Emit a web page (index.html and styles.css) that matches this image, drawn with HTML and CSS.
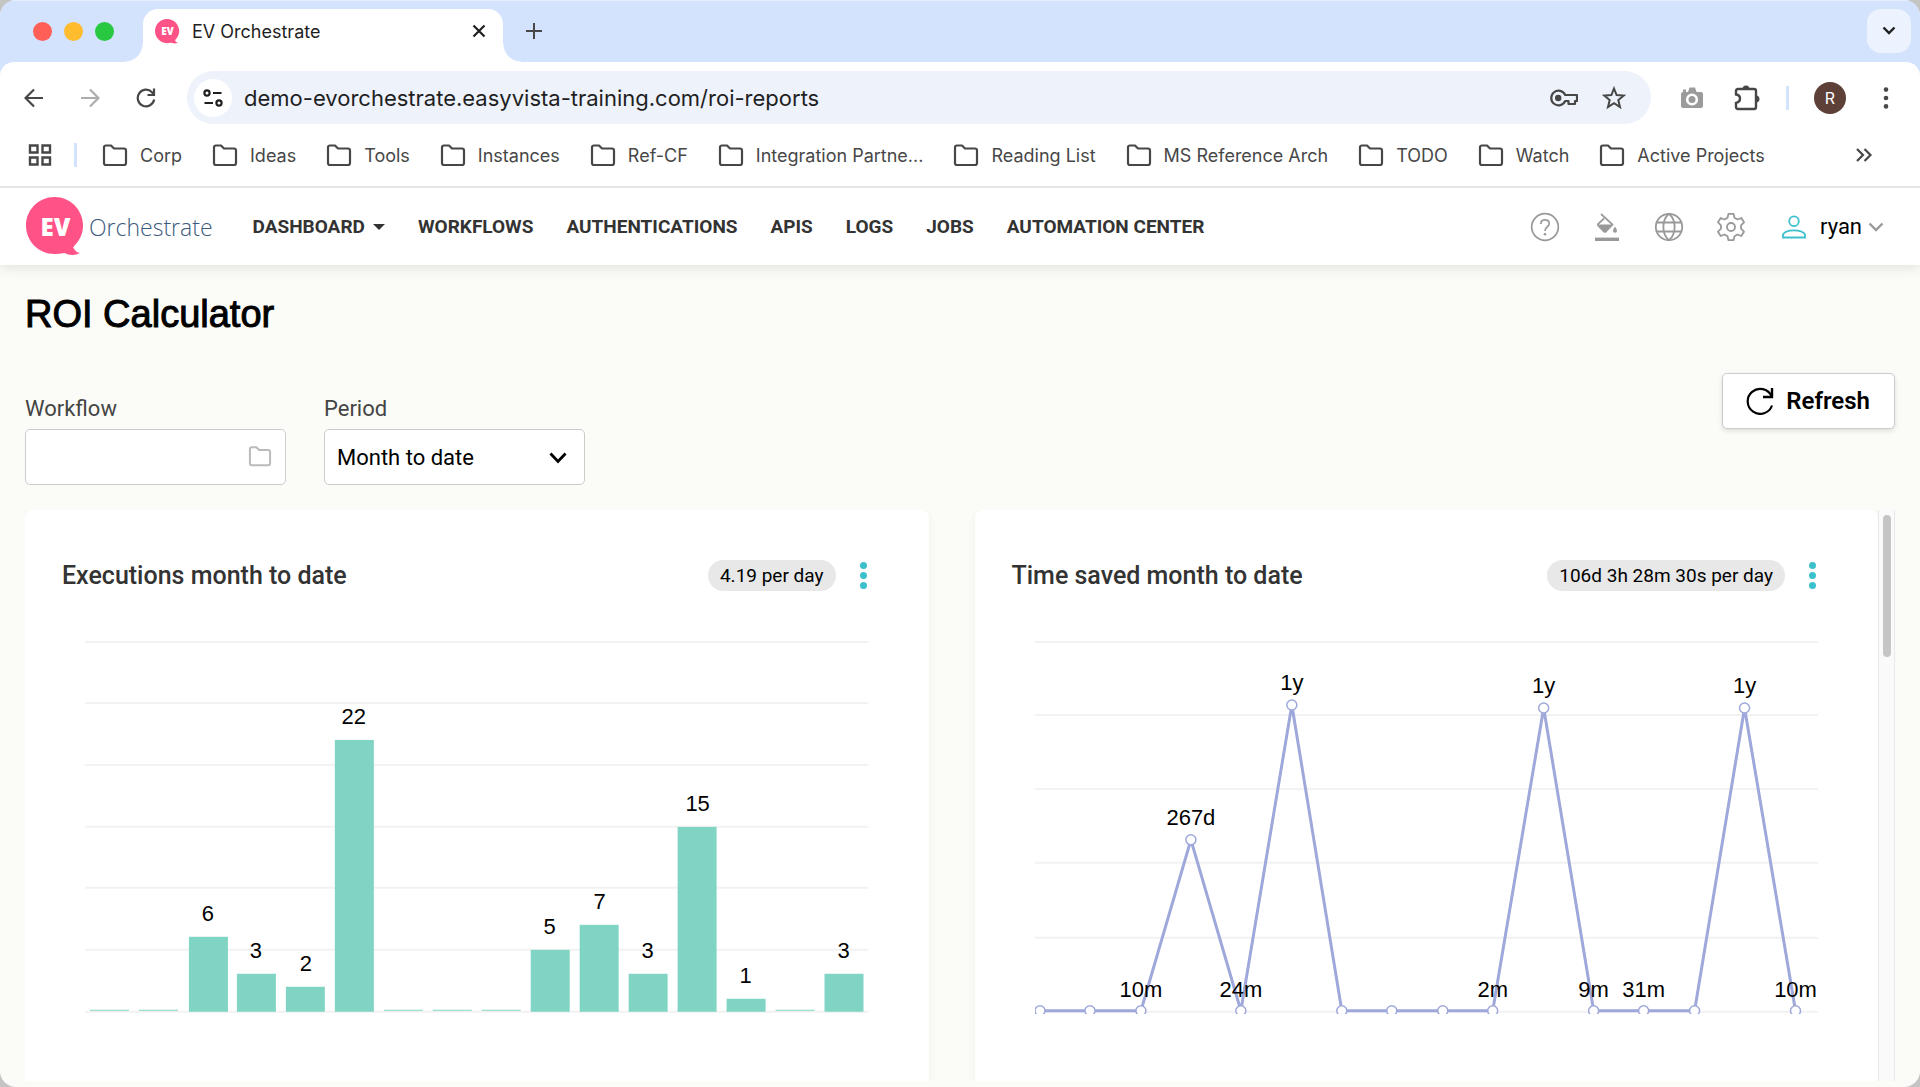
FILE: index.html
```html
<!DOCTYPE html>
<html lang="en">
<head>
    <meta charset="UTF-8">
    <meta name="viewport" content="width=device-width, initial-scale=1.0">
    <title>EV Orchestrate</title>
    <link rel="stylesheet" href="styles.css">
</head>
<body>
    <svg class="defs" aria-hidden="true">
        <symbol id="folder" viewBox="0 0 26 24">
            <path d="M2 4.5Q2 2.5 4 2.5H9L12 5.5H22Q24 5.5 24 7.500V20Q24 22 22 22H4Q2 22 2 20Z" fill="none" stroke="currentColor" stroke-width="2.200" stroke-linejoin="round"/>
        </symbol>
        <symbol id="bubble" viewBox="0 0 60 60">
            <path d="M29 0C45 0 58 13 58 29C58 38 54 45 48 51Q50 56 55 57Q47 61 39 57Q34 58 29 58C13 58 0 45 0 29C0 13 13 0 29 0Z" fill="#ff5287"/>
        </symbol>
    </svg>

    <div class="window">
        <div class="tab-strip">
            <div class="lights">
                <span class="light red"></span>
                <span class="light yellow"></span>
                <span class="light green"></span>
            </div>
            <div class="tab">
                <span class="favicon"><svg><use href="#bubble"/></svg><b>EV</b></span>
                <span class="tab-title">EV Orchestrate</span>
                <button class="icon-btn" aria-label="Close tab">
                    <svg width="14" height="14" viewBox="0 0 14 14"><path d="M1.500 1.500L12.500 12.500M12.500 1.500L1.500 12.500" stroke="#1f1f1f" stroke-width="2.200"/></svg>
                </button>
            </div>
            <button class="icon-btn new-tab" aria-label="New tab">
                <svg width="16" height="16" viewBox="0 0 16 16"><path d="M8 0V16M0 8H16" stroke="#474747" stroke-width="2"/></svg>
            </button>
            <button class="icon-btn tab-search" aria-label="Search tabs">
                <svg width="14" height="10" viewBox="0 0 14 10"><path d="M1.500 1.500L7 7L12.500 1.500" fill="none" stroke="#1f1f1f" stroke-width="2.400"/></svg>
            </button>
        </div>

        <div class="toolbar">
            <div class="address-row">
                <div class="history">
                    <button class="icon-btn" aria-label="Back">
                        <svg width="20" height="20" viewBox="0 0 20 20"><path d="M19 10H2M10 1.500L1.500 10L10 18.500" fill="none" stroke="#474747" stroke-width="2.200"/></svg>
                    </button>
                    <button class="icon-btn" aria-label="Forward">
                        <svg width="20" height="20" viewBox="0 0 20 20"><path d="M1 10H18M10 1.500L18.500 10L10 18.500" fill="none" stroke="#adadad" stroke-width="2.200"/></svg>
                    </button>
                    <button class="icon-btn" aria-label="Reload">
                        <svg width="20" height="20" viewBox="0 0 20 20"><path d="M18.200 11.500A8.300 8.300 0 1 1 16 4.200L18 6.500" fill="none" stroke="#474747" stroke-width="2.200"/><path d="M18 .5V7H11.500" fill="none" stroke="#474747" stroke-width="2.200"/></svg>
                    </button>
                </div>
                <div class="omnibox">
                    <button class="icon-btn site-info" aria-label="View site information">
                        <svg width="20" height="18" viewBox="0 0 20 18"><g fill="none" stroke="#1f1f1f" stroke-width="2.200"><circle cx="4" cy="4" r="2.600"/><path d="M10 4H18.500"/><circle cx="16" cy="14" r="2.600"/><path d="M1.500 14H10"/></g></svg>
                    </button>
                    <input class="url" type="text" aria-label="Address" value="demo-evorchestrate.easyvista-training.com/roi-reports">
                    <button class="icon-btn" aria-label="Passwords">
                        <svg width="28" height="18" viewBox="0 0 28 18"><path d="M15.200 6A7.300 7.300 0 1 0 15.200 12H18.500V15H25V12H27V6Z" fill="none" stroke="#474747" stroke-width="2.200" stroke-linejoin="round"/><circle cx="8.200" cy="9" r="3.200" fill="#474747"/></svg>
                    </button>
                    <button class="icon-btn" aria-label="Bookmark this tab">
                        <svg width="24" height="24" viewBox="0 0 24 24"><path d="M12 2.500L14.600 9L21.700 9.500L16.300 14L18 21L12 17.200L6 21L7.700 14L2.300 9.500L9.400 9Z" fill="none" stroke="#474747" stroke-width="2"/></svg>
                    </button>
                </div>
                <div class="extensions">
                    <button class="icon-btn" aria-label="Screenshot">
                        <svg width="24" height="24" viewBox="0 0 24 24"><path d="M3 6V3.500H6V6H8L9.500 1.500H15L16.500 6H21Q23 6 23 8V20Q23 22 21 22H3Q1 22 1 20V8Q1 6 3 6Z" fill="#9b9b9b"/><circle cx="12" cy="13.500" r="4.800" fill="#9b9b9b" stroke="#fff" stroke-width="2.600"/></svg>
                    </button>
                    <button class="icon-btn" aria-label="Extensions">
                        <svg width="26" height="26" viewBox="0 0 26 26"><path d="M2 6Q2 4 4 4H20Q22 4 22 6V22Q22 24 20 24H4Q2 24 2 22V18Q6 17 6 13.500Q6 10 2 9.500Z" fill="none" stroke="#474747" stroke-width="2.400"/><path d="M8.500 4A3.500 3.500 0 0 1 15.500 4ZM22 10.500A3.500 3.500 0 0 1 22 17.500Z" fill="#474747"/></svg>
                    </button>
                    <span class="divider"></span>
                    <button class="profile" aria-label="Profile">R</button>
                    <button class="icon-btn" aria-label="Chrome menu">
                        <svg width="6" height="22" viewBox="0 0 6 22"><g fill="#474747"><circle cx="3" cy="2.600" r="2.300"/><circle cx="3" cy="11" r="2.300"/><circle cx="3" cy="19.400" r="2.300"/></g></svg>
                    </button>
                </div>
            </div>

            <div class="bookmarks">
                <button class="icon-btn" aria-label="Tab groups">
                    <svg width="24" height="24" viewBox="0 0 24 24"><path d="M2 2.500H9.500V9.500H2ZM14.500 2.500H22V9.500H14.500ZM2 14.500H9.500V21.500H2ZM14.500 14.500H22V21.500H14.500Z" fill="none" stroke="#474747" stroke-width="2.400"/></svg>
                </button>
                <span class="divider"></span>
                <nav class="bookmark-list">
                    <a href="#"><svg><use href="#folder"/></svg>Corp</a>
                    <a href="#"><svg><use href="#folder"/></svg>Ideas</a>
                    <a href="#"><svg><use href="#folder"/></svg>Tools</a>
                    <a href="#"><svg><use href="#folder"/></svg>Instances</a>
                    <a href="#"><svg><use href="#folder"/></svg>Ref-CF</a>
                    <a href="#"><svg><use href="#folder"/></svg>Integration Partne...</a>
                    <a href="#"><svg><use href="#folder"/></svg>Reading List</a>
                    <a href="#"><svg><use href="#folder"/></svg>MS Reference Arch</a>
                    <a href="#"><svg><use href="#folder"/></svg>TODO</a>
                    <a href="#"><svg><use href="#folder"/></svg>Watch</a>
                    <a href="#"><svg><use href="#folder"/></svg>Active Projects</a>
                </nav>
                <button class="icon-btn" aria-label="More bookmarks">
                    <svg width="16" height="14" viewBox="0 0 16 14"><path d="M1 1L7 7L1 13M8.500 1L14.500 7L8.500 13" fill="none" stroke="#474747" stroke-width="2.200"/></svg>
                </button>
            </div>
        </div>

        <header class="app-header">
            <a class="logo" href="#">
                <span class="logo-mark"><svg><use href="#bubble"/></svg><b>EV</b></span>
                <span class="logo-text">Orchestrate</span>
            </a>
            <nav class="main-nav">
                <a href="#">DASHBOARD <svg width="12" height="6" viewBox="0 0 12 6"><path d="M0 0H12L6 6Z" fill="#333"/></svg></a>
                <a href="#">WORKFLOWS</a>
                <a href="#">AUTHENTICATIONS</a>
                <a href="#">APIS</a>
                <a href="#">LOGS</a>
                <a href="#">JOBS</a>
                <a href="#">AUTOMATION CENTER</a>
            </nav>
            <div class="tools">
                <button class="icon-btn" aria-label="Help">
                    <svg width="30" height="30" viewBox="0 0 30 30"><circle cx="15" cy="15" r="13.300" fill="none" stroke="#999" stroke-width="1.700"/><path d="M10.800 12Q10.800 7.800 15 7.800Q19.200 7.800 19.200 11.500Q19.200 13.500 17 15Q15 16.500 15 19" fill="none" stroke="#999" stroke-width="1.700"/><circle cx="15" cy="22.300" r="1.300" fill="#999"/></svg>
                </button>
                <button class="icon-btn" aria-label="Theme">
                    <svg width="30" height="30" viewBox="0 0 30 30"><path d="M9 2L20.500 12.500L14 19.500Q13 20.300 12 19.500L6 13.500Q5.500 12.800 6 12L12 6.500" fill="none" stroke="#999" stroke-width="1.700"/><path d="M6 12.500H20.500L14 19.500Q13 20.500 12 19.500Z" fill="#999"/><path d="M23 14.500Q25 17.500 25 18.700A2 2 0 0 1 21 18.700Q21 17.500 23 14.500Z" fill="#999"/><path d="M3 27.300H27" stroke="#999" stroke-width="3.400"/></svg>
                </button>
                <button class="icon-btn" aria-label="Language">
                    <svg width="30" height="30" viewBox="0 0 30 30"><g fill="none" stroke="#999" stroke-width="1.800"><circle cx="15" cy="15" r="13.200"/><path d="M15 1.800C7.500 8 7.500 22 15 28.200C22.500 22 22.500 8 15 1.800ZM3 10.500H27M3 19.500H27"/></g></svg>
                </button>
                <button class="icon-btn" aria-label="Settings">
                    <svg width="30" height="30" viewBox="0 0 30 30"><g fill="none" stroke="#999" stroke-width="1.800" stroke-linejoin="round"><path d="M12.500 1.800H17.500L18.500 5.800L21.500 7.500L25.300 6L28 10.300L25 13.300V16.700L28 19.700L25.300 24L21.500 22.500L18.500 24.200L17.500 28.200H12.500L11.500 24.200L8.500 22.500L4.700 24L2 19.700L5 16.700V13.300L2 10.300L4.700 6L8.500 7.500L11.500 5.800Z"/><circle cx="15" cy="15" r="4"/></g></svg>
                </button>
                <button class="user">
                    <svg width="24" height="24" viewBox="0 0 24 24"><g fill="none" stroke="#3cc1cc" stroke-width="1.800"><circle cx="12" cy="6.200" r="4.800"/><path d="M1 22.500V19.500Q3 15.300 12 15.300Q21 15.300 23 19.500V22.500Z"/></g></svg>
                    <span>ryan</span>
                    <svg class="user-arrow" width="16" height="10" viewBox="0 0 16 10"><path d="M1.500 1.500L8 8L14.500 1.500" fill="none" stroke="#999" stroke-width="2.400"/></svg>
                </button>
            </div>
        </header>

        <main class="page">
            <h1>ROI Calculator</h1>

            <form class="filters">
                <div class="field">
                    <label for="workflow">Workflow</label>
                    <div class="control">
                        <input type="text" id="workflow">
                        <svg class="control-folder"><use href="#folder"/></svg>
                    </div>
                </div>
                <div class="field">
                    <label for="period">Period</label>
                    <div class="control">
                        <select id="period">
                            <option>Month to date</option>
                        </select>
                        <svg class="control-arrow" viewBox="0 0 18 12"><path d="M1.500 1.500L9 9.500L16.500 1.500" fill="none" stroke="#000" stroke-width="2.800"/></svg>
                    </div>
                </div>
                <button type="button" class="refresh">
                    <svg width="28" height="28" viewBox="0 0 28 28"><path d="M26 18.500A12.500 12.500 0 1 1 25.500 9" fill="none" stroke="#000" stroke-width="2.200"/><path d="M26 1V10H17" fill="none" stroke="#000" stroke-width="2.400"/></svg>
                    Refresh
                </button>
            </form>

            <div class="scroller">
                <section class="card">
                    <div class="card-head">
                        <h2>Executions month to date</h2>
                        <span class="badge">4.19 per day</span>
                        <button class="icon-btn card-menu" aria-label="Executions options"><i></i><i></i><i></i></button>
                    </div>
                    <svg class="chart" viewBox="0 0 784 383">
                        <path class="grid" d="M0 10H784M0 71H784M0 133H784M0 195H784M0 256H784M0 318H784M0 380H784"/>
                        <g class="bars">
                            <rect x="5" y="378" width="39" height="1"/>
                            <rect x="54" y="378" width="39" height="1"/>
                            <rect x="104" y="305" width="39" height="75"/>
                            <rect x="152" y="342" width="39" height="38"/>
                            <rect x="201" y="355" width="39" height="25"/>
                            <rect x="250" y="108" width="39" height="272"/>
                            <rect x="299" y="378" width="39" height="1"/>
                            <rect x="348" y="378" width="39" height="1"/>
                            <rect x="397" y="378" width="39" height="1"/>
                            <rect x="446" y="318" width="39" height="62"/>
                            <rect x="495" y="293" width="39" height="87"/>
                            <rect x="544" y="342" width="39" height="38"/>
                            <rect x="593" y="195" width="39" height="185"/>
                            <rect x="642" y="367" width="39" height="13"/>
                            <rect x="691" y="378" width="39" height="1"/>
                            <rect x="740" y="342" width="39" height="38"/>
                        </g>
                        <g class="values">
                            <text x="123" y="289">6</text>
                            <text x="171" y="326">3</text>
                            <text x="221" y="339">2</text>
                            <text x="269" y="92">22</text>
                            <text x="465" y="302">5</text>
                            <text x="515" y="277">7</text>
                            <text x="563" y="326">3</text>
                            <text x="613" y="179">15</text>
                            <text x="661" y="351">1</text>
                            <text x="759" y="326">3</text>
                        </g>
                    </svg>
                </section>

                <section class="card">
                    <div class="card-head">
                        <h2>Time saved month to date</h2>
                        <span class="badge">106d 3h 28m 30s per day</span>
                        <button class="icon-btn card-menu" aria-label="Time saved options"><i></i><i></i><i></i></button>
                    </div>
                    <svg class="chart" viewBox="0 0 784 382">
                        <path class="grid" d="M0 10H784M0 83H784M0 157H784M0 231H784M0 306H784M0 380H784"/>
                        <polyline class="line" points="5,379 55,379 106,379 156,208 206,379 257,73 307,379 357,379 408,379 458,379 509,76 559,379 609,379 660,379 710,76 761,379"/>
                        <g class="points">
                            <circle cx="5" cy="379" r="5"/>
                            <circle cx="55" cy="379" r="5"/>
                            <circle cx="106" cy="379" r="5"/>
                            <circle cx="156" cy="208" r="5"/>
                            <circle cx="206" cy="379" r="5"/>
                            <circle cx="257" cy="73" r="5"/>
                            <circle cx="307" cy="379" r="5"/>
                            <circle cx="357" cy="379" r="5"/>
                            <circle cx="408" cy="379" r="5"/>
                            <circle cx="458" cy="379" r="5"/>
                            <circle cx="509" cy="76" r="5"/>
                            <circle cx="559" cy="379" r="5"/>
                            <circle cx="609" cy="379" r="5"/>
                            <circle cx="660" cy="379" r="5"/>
                            <circle cx="710" cy="76" r="5"/>
                            <circle cx="761" cy="379" r="5"/>
                        </g>
                        <g class="values">
                            <text x="106" y="365">10m</text>
                            <text x="156" y="193">267d</text>
                            <text x="206" y="365">24m</text>
                            <text x="257" y="58">1y</text>
                            <text x="458" y="365">2m</text>
                            <text x="509" y="61">1y</text>
                            <text x="559" y="365">9m</text>
                            <text x="609" y="365">31m</text>
                            <text x="710" y="61">1y</text>
                            <text x="761" y="365">10m</text>
                        </g>
                    </svg>
                </section>
                <div class="scrollbar"><div class="thumb"></div></div>
            </div>
        </main>
    </div>
</body>
</html>
```
FILE: styles.css
```css
* {
    margin: 0;
    padding: 0;
    box-sizing: border-box;
}

body {
    font-family: Roboto, Arial, sans-serif;
    background: #c4c4c4;
    color: #000;
}

button {
    border: none;
    background: none;
    font-family: inherit;
    color: inherit;
    cursor: pointer;
}

a {
    color: inherit;
    text-decoration: none;
}

.defs {
    display: none;
}

.window {
    display: flex;
    flex-direction: column;
    height: 100vh;
    border-radius: 16px;
    overflow: hidden;
    background: #fbfcf8;
}

.icon-btn {
    display: flex;
    align-items: center;
    justify-content: center;
}

/* Tab strip, runs under the rounded corners of the toolbar */
.tab-strip {
    display: flex;
    margin-bottom: -14px;
    padding: 8px 9px 14px 33px;
    background: #d3e3fd;
    border-top: 1px solid #e6effc;
    font-family: Inter, sans-serif;
}

.lights {
    display: flex;
    gap: 12px;
    padding-top: 13px;
    margin-right: 29px;
}

.light {
    width: 19px;
    height: 19px;
    border-radius: 50%;
}

.red {
    background: #ff5f57;
}

.yellow {
    background: #febc2e;
}

.green {
    background: #28c840;
}

.tab {
    position: relative;
    display: flex;
    align-items: center;
    width: 360px;
    height: 53px;
    padding: 0 17px 9px 12px;
    background: #fff;
    border-radius: 15px 15px 0 0;
}

.tab::before,
.tab::after {
    content: "";
    position: absolute;
    bottom: 0;
    width: 18px;
    height: 18px;
}

.tab::before {
    right: 100%;
    background: radial-gradient(circle at 0 0, transparent 17px, #fff 18px);
}

.tab::after {
    left: 100%;
    background: radial-gradient(circle at 100% 0, transparent 17px, #fff 18px);
}

.favicon,
.logo-mark {
    position: relative;
    display: flex;
    align-items: center;
    justify-content: center;
    color: #fff;
}

.favicon {
    width: 25px;
    height: 25px;
    margin-right: 12px;
    font-size: 10px;
}

.favicon svg,
.logo-mark svg {
    position: absolute;
    width: 100%;
    height: 100%;
}

.favicon b,
.logo-mark b {
    position: relative;
    font-family: "Open Sans", sans-serif;
    font-weight: 800;
}

.tab-title {
    flex: 1;
    font-size: 18px;
    color: #1f1f1f;
}

.new-tab {
    width: 32px;
    height: 44px;
    margin-left: 15px;
}

.tab-search {
    width: 44px;
    height: 44px;
    margin-left: auto;
    border-radius: 14px;
    background: #ecf3fe;
}

/* Toolbar */
.toolbar {
    position: relative;
    background: #fff;
    border-radius: 14px 14px 0 0;
    font-family: Inter, sans-serif;
    color: #474747;
}

.address-row {
    display: flex;
    align-items: center;
    padding: 9px 31px 9px 24px;
}

.history {
    display: flex;
    gap: 36px;
    margin-right: 31px;
}

.omnibox {
    display: flex;
    flex: 1;
    align-items: center;
    gap: 24px;
    height: 53px;
    padding: 0 25px 0 7px;
    border-radius: 27px;
    background: #edf2fb;
}

.site-info {
    width: 38px;
    height: 38px;
    border-radius: 50%;
    background: #fff;
}

.url {
    flex: 1;
    margin-left: -12px;
    border: none;
    outline: none;
    background: none;
    font-family: inherit;
    font-size: 22px;
    color: #1f1f1f;
}

.extensions {
    display: flex;
    align-items: center;
    gap: 30px;
    margin-left: 29px;
}

.divider {
    width: 3px;
    height: 24px;
    background: #d3e3fd;
}

.profile {
    width: 32px;
    height: 32px;
    border-radius: 50%;
    background: #5d4037;
    color: #fff;
    font-size: 16px;
}

.extensions .divider {
    margin-left: -4px;
}

.extensions .profile {
    margin-left: -5px;
    margin-right: 7px;
}

.bookmarks {
    display: flex;
    align-items: center;
    height: 55px;
    padding: 0 48px 9px 28px;
    border-bottom: 2px solid #e6e6e6;
}

.bookmarks .divider {
    margin: 0 25px 0 22px;
}

.bookmark-list {
    display: flex;
    flex: 1;
    gap: 30px;
    font-size: 18px;
}

.bookmark-list a {
    display: flex;
    align-items: center;
    gap: 12px;
    white-space: nowrap;
}

.bookmark-list svg {
    width: 26px;
    height: 24px;
}

/* App header */
.app-header {
    display: flex;
    align-items: center;
    height: 77px;
    padding: 0 36px 0 26px;
    background: #fff;
    box-shadow: 0 3px 12px rgba(0, 0, 0, 0.1);
}

.logo {
    display: flex;
    align-items: center;
    gap: 4px;
    margin-right: 40px;
}

.logo-mark {
    width: 59px;
    height: 59px;
    font-size: 24px;
}

.logo-text {
    font-family: "Open Sans", sans-serif;
    font-size: 23px;
    font-weight: 300;
    color: #3c5a7d;
}

.main-nav {
    display: flex;
    gap: 33px;
    font-size: 19px;
    font-weight: 700;
    color: #333;
}

.main-nav a {
    display: flex;
    align-items: center;
    gap: 8px;
}

.tools {
    display: flex;
    align-items: center;
    gap: 32px;
    margin-left: auto;
}

.user {
    display: flex;
    align-items: center;
    gap: 14px;
    margin-left: 4px;
    font-size: 22px;
}

.user-arrow {
    margin-left: -8px;
}

/* Page */
.page {
    display: flex;
    flex: 1;
    flex-direction: column;
    min-height: 0;
    padding: 25px 25px 6px;
}

h1 {
    font-family: "Liberation Sans", Arial, sans-serif;
    font-size: 38px;
    font-weight: 400;
    line-height: 48px;
    -webkit-text-stroke: 1px #000;
}

.filters {
    display: flex;
    align-items: flex-start;
    gap: 38px;
    margin: 35px 0 25px;
}

.field {
    width: 261px;
    margin-top: 22px;
}

.field label {
    display: block;
    margin-bottom: 6px;
    font-size: 22px;
    line-height: 28px;
    color: #444;
}

.control {
    position: relative;
}

.control input,
.control select {
    width: 100%;
    height: 56px;
    padding: 0 12px;
    border: 1px solid #ccc;
    border-radius: 5px;
    background: #fff;
    font-family: inherit;
    font-size: 22px;
    color: #000;
    appearance: none;
}

.control-folder {
    position: absolute;
    top: 16px;
    right: 14px;
    width: 24px;
    height: 22px;
    color: #bbb;
}

.control-arrow {
    position: absolute;
    top: 23px;
    right: 18px;
    width: 18px;
    height: 12px;
}

.refresh {
    display: flex;
    align-items: center;
    gap: 12px;
    height: 56px;
    margin-left: auto;
    padding: 0 24px 0 23px;
    border: 1px solid #ccc;
    border-radius: 5px;
    background: #fff;
    box-shadow: 0 2px 5px rgba(0, 0, 0, 0.12);
    font-size: 24px;
    font-weight: 600;
}

.scroller {
    display: flex;
    flex: 1;
    min-height: 0;
    overflow: hidden;
}

.card {
    flex: 1;
    min-width: 0;
    padding: 50px 60px 0;
    background: #fff;
    border-radius: 8px 8px 0 0;
    box-shadow: 0 2px 10px rgba(0, 0, 0, 0.05);
}

.card + .card {
    margin-left: 46px;
}

.card-head {
    display: flex;
    align-items: center;
    height: 31px;
    margin: 0 0 41px -23px;
}

h2 {
    flex: 1;
    font-size: 25px;
    font-weight: 500;
    color: #333;
}

.badge {
    padding: 0 12px;
    border-radius: 16px;
    background: #e8e8e8;
    font-size: 19px;
    line-height: 31px;
}

.card-menu {
    flex-direction: column;
    gap: 3px;
    margin: 0 2px 0 24px;
}

.card-menu i {
    width: 7px;
    height: 7px;
    border-radius: 50%;
    background: #3cc1cc;
}

.chart {
    display: block;
    width: 100%;
    overflow: hidden;
}

.grid {
    fill: none;
    stroke: #f2f2f2;
    stroke-width: 2;
}

.bars {
    fill: #80d4c3;
}

.line {
    fill: none;
    stroke: #9fa8da;
    stroke-width: 3;
}

.points {
    fill: #fff;
    stroke: #9fa8da;
    stroke-width: 1.5;
}

.values {
    font-family: "Liberation Sans", Arial, sans-serif;
    font-size: 22px;
    text-anchor: middle;
}

.scrollbar {
    width: 17px;
    padding: 5px 3px 0 4px;
    border: 1px solid #e8e8e8;
    border-width: 0 1px;
    background: #fafafa;
}

.thumb {
    height: 25%;
    border-radius: 5px;
    background: #c5c5c5;
}
```
